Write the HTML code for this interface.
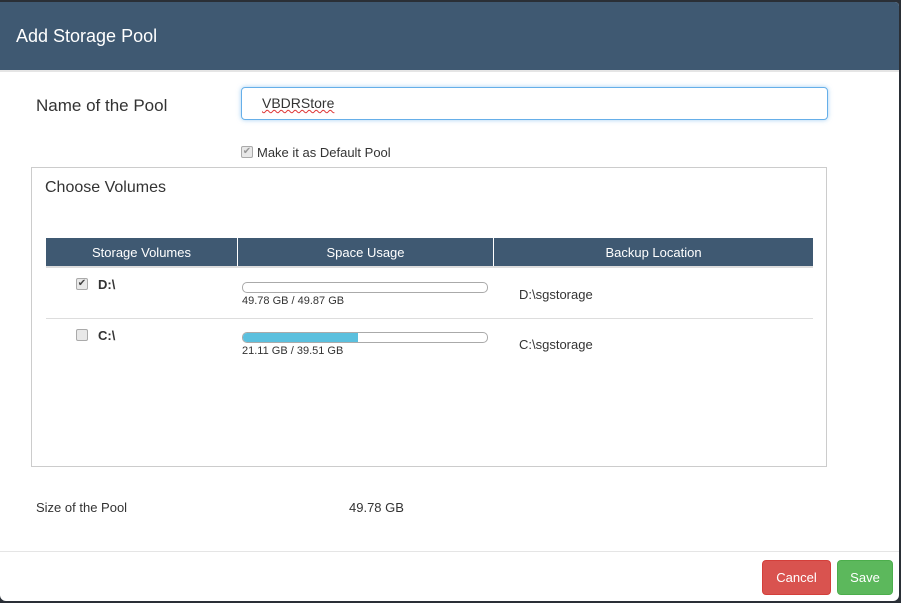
<!DOCTYPE html>
<html><head><style>
body{margin:0;width:901px;height:603px;background:#2a2f36;position:relative;overflow:hidden;font-family:"Liberation Sans",sans-serif;color:#333}
.m{position:absolute;left:0;top:2px;width:899px;height:599px;background:#fff;border-radius:0 4px 6px 6px;overflow:hidden}
.hd{position:absolute;left:0;top:0;width:899px;height:68px;background:#3f5972;border-bottom:2px solid #e5e5e5}
.a{position:absolute;white-space:nowrap}
.th{position:absolute;top:236px;height:30px;background:#3f5972;color:#fff;font-size:13px;text-align:center;line-height:30px}
.bar{position:absolute;left:242px;width:244px;height:9px;border:1px solid #aaa;border-radius:5px;background:#fff;overflow:hidden}
.cb{position:absolute;width:10px;height:10px;border:1px solid #aaa;border-radius:2px;background:#e8e8e8;font-size:10px;line-height:10px;text-align:center;color:#444}
</style></head><body>
<div class="m">
<div class="hd"><div class="a" style="left:16px;top:24px;color:#fff;font-size:18px">Add Storage Pool</div></div>
<div class="a" style="left:36px;top:94px;font-size:17px">Name of the Pool</div>
<div class="a" style="left:241px;top:85px;width:585px;height:31px;border:1px solid #66afe9;border-radius:4px;box-shadow:0 0 5px rgba(102,175,233,.6)"></div>
<div class="a" style="left:262px;top:93px;font-size:14px;text-decoration:underline wavy #d33;text-decoration-thickness:1px">VBDRStore</div>
<div class="cb" style="left:241px;top:144px;color:#999">✔</div>
<div class="a" style="left:257px;top:143px;font-size:13px">Make it as Default Pool</div>
<div class="a" style="left:31px;top:165px;width:794px;height:298px;border:1px solid #ccc"></div>
<div class="a" style="left:45px;top:177px;font-size:16px">Choose Volumes</div>
<div class="th" style="left:46px;width:191px">Storage Volumes</div>
<div class="th" style="left:238px;width:255px">Space Usage</div>
<div class="th" style="left:494px;width:319px">Backup Location</div>
<div class="a" style="left:46px;top:264px;width:767px;height:2px;background:#ddd"></div>
<div class="cb" style="left:76px;top:276px">✔</div>
<div class="a" style="left:98px;top:275px;font-size:13px;font-weight:bold">D:\</div>
<div class="bar" style="top:280px"></div>
<div class="a" style="left:242px;top:293px;font-size:11px">49.78 GB / 49.87 GB</div>
<div class="a" style="left:519px;top:285px;font-size:13px">D:\sgstorage</div>
<div class="a" style="left:46px;top:316px;width:767px;height:1px;background:#ddd"></div>
<div class="cb" style="left:76px;top:327px"></div>
<div class="a" style="left:98px;top:326px;font-size:13px;font-weight:bold">C:\</div>
<div class="bar" style="top:330px"><div style="width:115px;height:100%;background:#5bc0de"></div></div>
<div class="a" style="left:242px;top:343px;font-size:11px">21.11 GB / 39.51 GB</div>
<div class="a" style="left:519px;top:335px;font-size:13px">C:\sgstorage</div>
<div class="a" style="left:36px;top:498px;font-size:13px">Size of the Pool</div>
<div class="a" style="left:349px;top:498px;font-size:13px">49.78 GB</div>
<div class="a" style="left:0;top:549px;width:899px;height:1px;background:#e5e5e5"></div>
<div class="a" style="left:762px;top:558px;width:67px;height:33px;background:#d9534f;border:1px solid #d43f3a;border-radius:4px;color:#fff;font-size:13px;text-align:center;line-height:33px">Cancel</div>
<div class="a" style="left:837px;top:558px;width:54px;height:33px;background:#5cb85c;border:1px solid #4cae4c;border-radius:4px;color:#fff;font-size:13px;text-align:center;line-height:33px">Save</div>
</div>
</body></html>
